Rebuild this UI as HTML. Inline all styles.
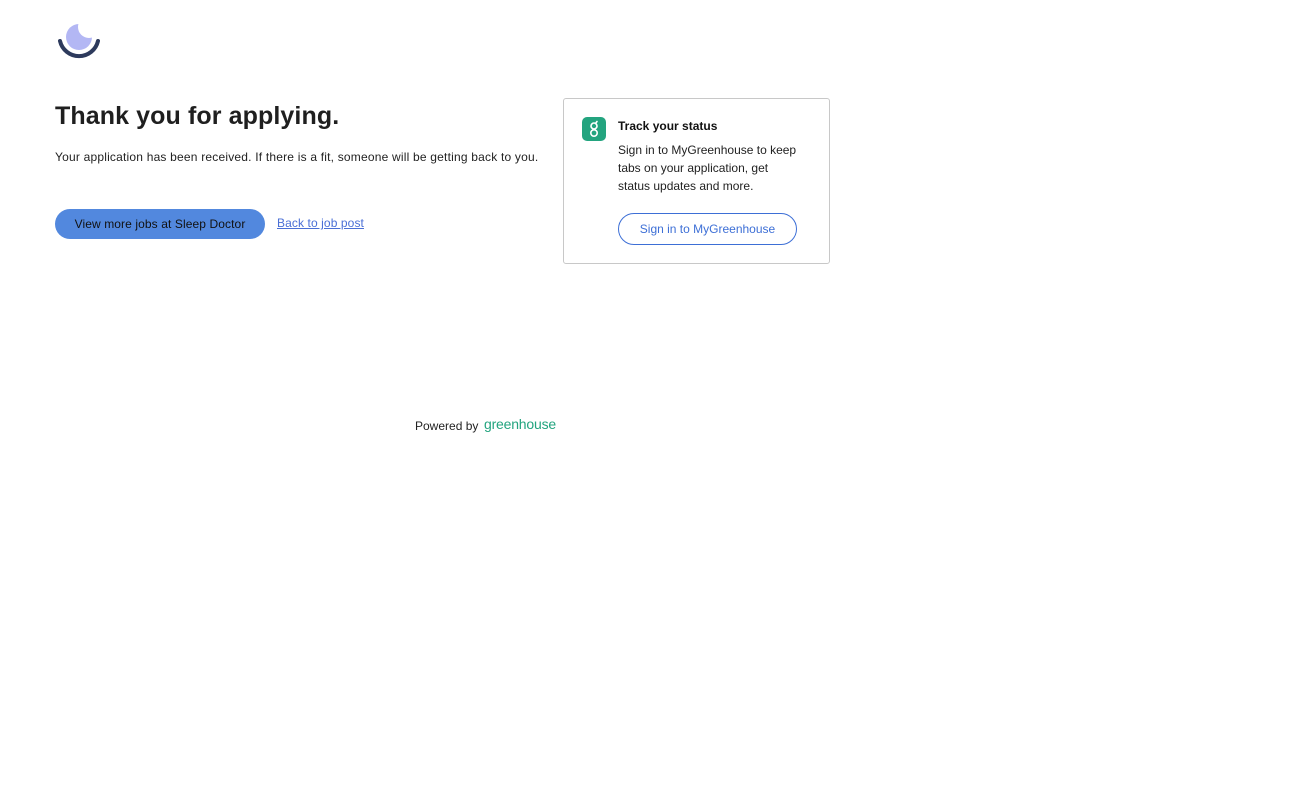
<!DOCTYPE html>
<html><head><meta charset="utf-8"><style>
*{margin:0;padding:0;box-sizing:border-box}
body{width:1297px;height:785px;background:#fff;font-family:"Liberation Sans",Arial,sans-serif;color:#222;position:relative;overflow:hidden}
.abs{position:absolute}
h1{position:absolute;left:55px;top:102px;font-size:25px;font-weight:bold;color:#1f1f1f;letter-spacing:0.1px}
.p{left:55px;top:150px;font-size:12px;color:#222;letter-spacing:0.2px}
.btn{left:55px;top:209px;width:210px;height:30px;border-radius:15px;background:#5288de;color:#111;font-size:12px;line-height:30px;text-align:center;letter-spacing:0.1px}
.lnk{left:277px;top:216px;font-size:12px;color:#4a6fd6;text-decoration:underline;letter-spacing:0.1px}
.card{left:563px;top:98px;width:267px;height:166px;border:1px solid #c8c8c8;border-radius:3px}
.ico{left:582px;top:117px;width:24px;height:24px;border-radius:5px;background:#23a47f}
.ct{left:618px;top:119px;font-size:12px;font-weight:bold;color:#111}
.cb{left:618px;top:141px;font-size:12px;line-height:18px;color:#222;width:200px}
.sb{left:618px;top:213px;width:179px;height:32px;border:1px solid #3d6fd6;border-radius:16px;color:#3d6fd6;font-size:12px;line-height:30px;text-align:center}
.pw{left:415px;top:419px;font-size:12px;color:#222}
.gh{left:484px;top:416px;font-size:14px;color:#23a47f;letter-spacing:-0.2px}
</style></head><body>
<svg class="abs" style="left:0;top:0" width="120" height="70" viewBox="0 0 120 70">
<defs><mask id="m"><rect width="120" height="70" fill="#fff"/><circle cx="89" cy="27" r="11" fill="#000"/></mask></defs>
<circle cx="79" cy="37" r="13" fill="#b3b7f4" mask="url(#m)"/>
<path d="M60 41 A19.5 19.5 0 0 0 98 41" fill="none" stroke="#2d3a5c" stroke-width="4" stroke-linecap="round"/>
</svg>
<h1>Thank you for applying.</h1>
<div class="abs p">Your application has been received. If there is a fit, someone will be getting back to you.</div>
<div class="abs btn">View more jobs at Sleep Doctor</div>
<div class="abs lnk">Back to job post</div>
<div class="abs card"></div>
<div class="abs ico"><svg width="24" height="24" viewBox="0 0 24 24"><circle cx="12" cy="9" r="3" fill="none" stroke="#fff" stroke-width="1.6"/><circle cx="12" cy="16" r="3.2" fill="none" stroke="#fff" stroke-width="1.6"/><path d="M13.5 6.5 L15 4.5" stroke="#fff" stroke-width="1.6" stroke-linecap="round"/></svg></div>
<div class="abs ct">Track your status</div>
<div class="abs cb">Sign in to MyGreenhouse to keep<br>tabs on your application, get<br>status updates and more.</div>
<div class="abs sb">Sign in to MyGreenhouse</div>
<div class="abs pw">Powered by</div>
<div class="abs gh">greenhouse</div>
</body></html>
